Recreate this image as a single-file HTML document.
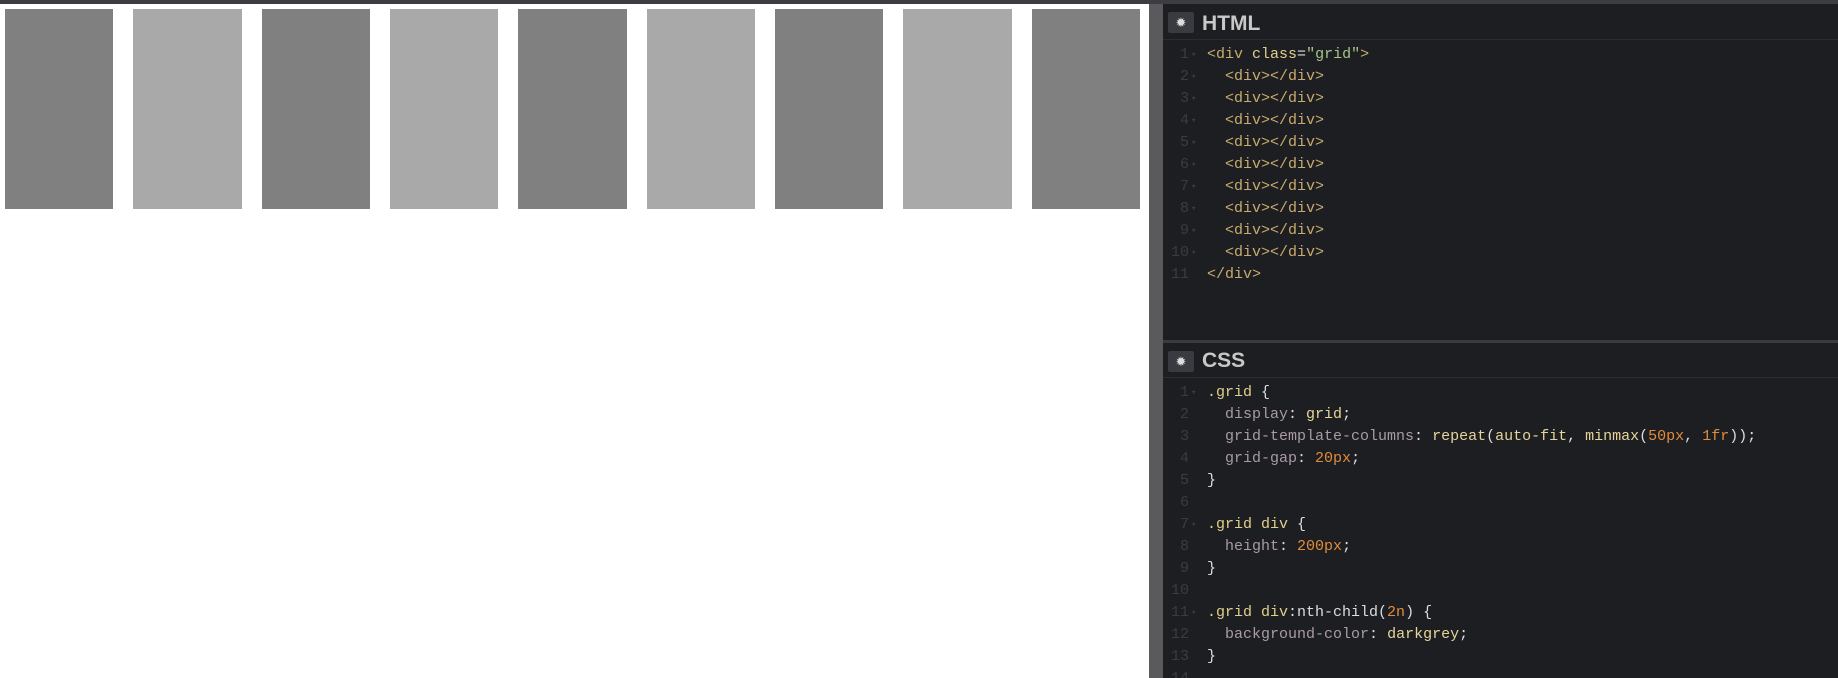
<!DOCTYPE html>
<html><head><meta charset="utf-8"><style>
*{margin:0;padding:0;box-sizing:border-box}
body{width:1838px;height:678px;overflow:hidden;background:#fff;position:relative;font-family:"Liberation Sans",sans-serif}
.top{position:absolute;left:0;top:0;width:1838px;height:4px;background:#3c3d41}
.grid{position:absolute;left:5px;top:9px;width:1135px;display:grid;grid-template-columns:repeat(9,1fr);gap:20px}
.grid div{height:200px;background:#808080}
.grid div:nth-child(2n){background:#a9a9a9}
.bar{position:absolute;left:1149px;top:4px;width:14px;height:674px;background:#5a5a5c}
.ed{position:absolute;left:1163px;top:4px;width:675px;height:674px;background:#1d1e22;overflow:hidden}
.hd{position:absolute;left:0;width:675px;height:30px;border-bottom:1px solid #2c2d31}
.gear{position:absolute;left:5px;width:26px;height:21px;background:#3a3b40;border-radius:2px;color:#ddd;font-size:13px;text-align:center;line-height:21px}
.tt{position:absolute;left:39px;font-size:21px;font-weight:bold;color:#c8c8c8;line-height:24px}
.code{position:absolute;left:0;width:675px;font-family:"Liberation Mono",monospace;font-size:15px;line-height:22px}
.ln{position:absolute;left:0;top:0;width:26px;text-align:right;color:#3b3c42}
.fd{position:absolute;left:28px;top:0;color:#3b3c42;font-size:9px;line-height:22px}
.c{position:absolute;left:44px;top:0;color:#ddd;white-space:pre}
.t{color:#c9ac6d}.a{color:#e3cf8c}.s{color:#a6c48b}
.p{color:#a99aa8}.v{color:#e6d59a}.n{color:#e08c3a}.sel{color:#e3cf8c}
.sep{position:absolute;left:0;top:336px;width:675px;height:3px;background:#3a3b3f}
</style></head><body>
<div class="top"></div>
<div class="grid"><div></div><div></div><div></div><div></div><div></div><div></div><div></div><div></div><div></div></div>
<div class="bar"></div>
<div class="ed">
 <div class="hd" style="top:6px"><div class="gear" style="top:2px">✹</div><div class="tt" style="top:2px">HTML</div></div>
 <div class="code" style="top:40px"><div class="ln">1<br>2<br>3<br>4<br>5<br>6<br>7<br>8<br>9<br>10<br>11</div><div class="fd">▾<br>▾<br>▾<br>▾<br>▾<br>▾<br>▾<br>▾<br>▾<br>▾</div><div class="c"><span class="t">&lt;div</span> <span class="a">class</span>=<span class="s">"grid"</span><span class="t">&gt;</span>
<span class="t">  &lt;div&gt;&lt;/div&gt;</span>
<span class="t">  &lt;div&gt;&lt;/div&gt;</span>
<span class="t">  &lt;div&gt;&lt;/div&gt;</span>
<span class="t">  &lt;div&gt;&lt;/div&gt;</span>
<span class="t">  &lt;div&gt;&lt;/div&gt;</span>
<span class="t">  &lt;div&gt;&lt;/div&gt;</span>
<span class="t">  &lt;div&gt;&lt;/div&gt;</span>
<span class="t">  &lt;div&gt;&lt;/div&gt;</span>
<span class="t">  &lt;div&gt;&lt;/div&gt;</span>
<span class="t">&lt;/div&gt;</span></div></div>
 <div class="sep"></div>
 <div class="hd" style="top:340px;height:34px"><div class="gear" style="top:7px">✹</div><div class="tt" style="top:5px">CSS</div></div>
 <div class="code" style="top:378px"><div class="ln">1<br>2<br>3<br>4<br>5<br>6<br>7<br>8<br>9<br>10<br>11<br>12<br>13<br>14</div><div class="fd">▾<br><br><br><br><br><br>▾<br><br><br><br>▾</div><div class="c"><span class="sel">.grid</span> {
  <span class="p">display</span>: <span class="v">grid</span>;
  <span class="p">grid-template-columns</span>: <span class="v">repeat</span>(<span class="v">auto-fit</span>, <span class="v">minmax</span>(<span class="n">50px</span>, <span class="n">1fr</span>));
  <span class="p">grid-gap</span>: <span class="n">20px</span>;
}

<span class="sel">.grid div</span> {
  <span class="p">height</span>: <span class="n">200px</span>;
}

<span class="sel">.grid div</span>:nth-child(<span class="n">2n</span>) {
  <span class="p">background-color</span>: <span class="v">darkgrey</span>;
}</div></div>
</div>
</body></html>
